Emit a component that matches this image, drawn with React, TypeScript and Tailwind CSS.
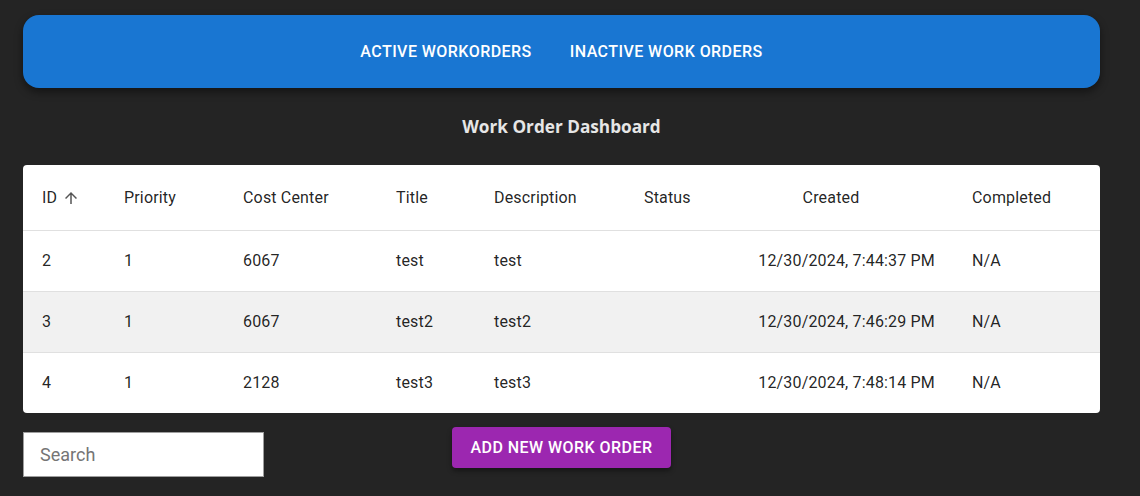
import React from "react";

const columns = [
  { label: "ID", w: "w-[82px]", align: "text-left" },
  { label: "Priority", w: "w-[119px]", align: "text-left" },
  { label: "Cost Center", w: "w-[153px]", align: "text-left" },
  { label: "Title", w: "w-[98px]", align: "text-left" },
  { label: "Description", w: "w-[150px]", align: "text-left" },
  { label: "Status", w: "w-[84px]", align: "text-left" },
  { label: "Created", w: "w-[244px]", align: "text-center" },
  { label: "Completed", w: "w-[147px]", align: "text-left" },
];

const rows = [
  { id: 2, priority: 1, cost: "6067", title: "test", desc: "test", status: "", created: "12/30/2024, 7:44:37 PM", done: "N/A" },
  { id: 3, priority: 1, cost: "6067", title: "test2", desc: "test2", status: "", created: "12/30/2024, 7:46:29 PM", done: "N/A" },
  { id: 4, priority: 1, cost: "2128", title: "test3", desc: "test3", status: "", created: "12/30/2024, 7:48:14 PM", done: "N/A" },
];

const ArrowUp = () => (
  <svg viewBox="0 0 24 24" className="w-[18px] h-[18px] fill-current">
    <path d="M4 12l1.41 1.41L11 7.83V20h2V7.83l5.58 5.59L20 12l-8-8-8 8z" />
  </svg>
);

const App = () => {
  return (
    <div className="min-h-screen bg-[#242424] font-['Roboto','Liberation_Sans',sans-serif] pt-[15px]">
      <div className="w-[1077px] ml-[23px]">
        {/* nav bar */}
        <div className="h-[73px] bg-[#1976d2] rounded-[16px] shadow-[0_4px_8px_rgba(0,0,0,0.45)] flex items-center justify-center gap-[22px]">
          <button className="px-2 py-1.5 text-white text-[16px] font-medium tracking-[0.45px] uppercase">
            Active Workorders
          </button>
          <button className="px-2 py-1.5 text-white text-[16px] font-medium tracking-[0.45px] uppercase">
            Inactive Work Orders
          </button>
        </div>

        <div className="h-[77px] flex items-center justify-center">
          <h1 className="text-[17.2px] font-bold text-[#e6e6e6] font-['Open_Sans','Liberation_Sans',sans-serif]">
            Work Order Dashboard
          </h1>
        </div>

        {/* table */}
        <div className="bg-white rounded-[4px] overflow-hidden text-[16px] tracking-[0.17px] text-[rgba(0,0,0,0.87)]">
          <div className="flex h-[66px] items-center border-b border-[#e0e0e0]">
            {columns.map((c, i) => (
              <div key={c.label} className={`${c.w} ${c.align} px-[19px] flex items-center ${i === 6 ? "justify-center" : ""}`}>
                <span>{c.label}</span>
                {i === 0 && (
                  <span className="ml-[5px] text-[#555] flex items-center">
                    <ArrowUp />
                  </span>
                )}
              </div>
            ))}
          </div>
          {rows.map((r, idx) => (
            <div
              key={r.id}
              className={`flex items-center ${idx < rows.length - 1 ? "h-[61px] border-b border-[#e0e0e0]" : "h-[60px]"} ${idx === 1 ? "bg-[#f1f1f1]" : ""}`}
            >
              <div className="w-[82px] px-[19px]">{r.id}</div>
              <div className="w-[119px] px-[19px]">{r.priority}</div>
              <div className="w-[153px] px-[19px]">{r.cost}</div>
              <div className="w-[98px] px-[19px]">{r.title}</div>
              <div className="w-[150px] px-[19px]">{r.desc}</div>
              <div className="w-[84px] px-[19px]">{r.status}</div>
              <div className="w-[244px] px-[18px] text-right">{r.created}</div>
              <div className="w-[147px] px-[19px]">{r.done}</div>
            </div>
          ))}
        </div>

        {/* bottom controls */}
        <div className="grid grid-cols-[1fr_auto_1fr] items-start mt-[14px]">
          <div className="pt-[5px]">
            <input
              type="text"
              placeholder="Search"
              className="w-[241px] h-[45px] bg-white border border-[#9e9e9e] px-[16px] text-[18px] text-[#333] placeholder:text-[#757575] outline-none"
            />
          </div>
          <button className="h-[41px] px-[18px] bg-[#9c27b0] text-white text-[16px] font-medium tracking-[0.457px] uppercase rounded-[4px] shadow-[0_3px_5px_rgba(0,0,0,0.4)]">
            Add New Work Order
          </button>
          <div />
        </div>
      </div>
    </div>
  );
};

export default App;
